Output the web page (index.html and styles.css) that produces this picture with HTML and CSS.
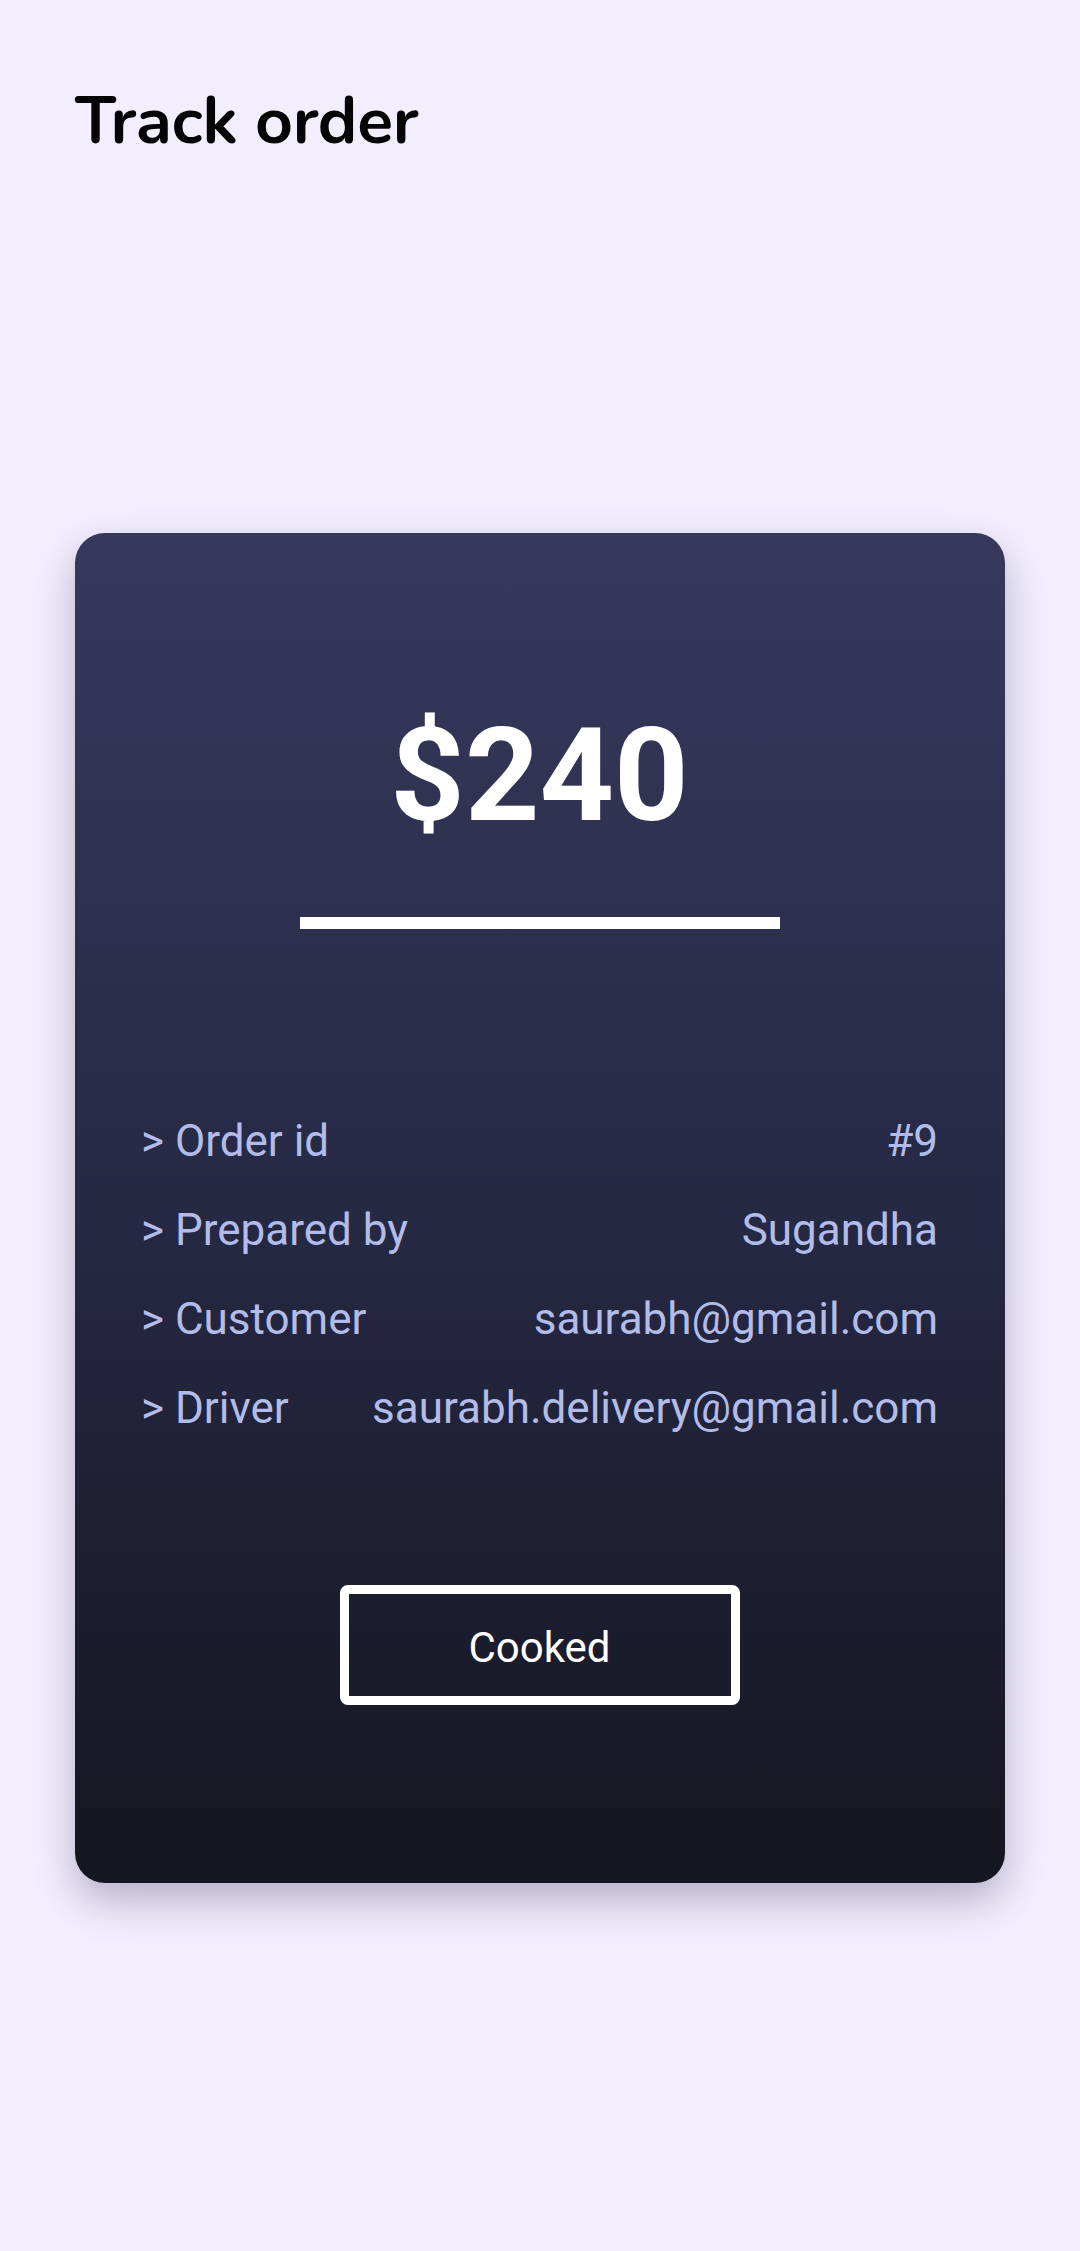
FILE: index.html
```html
<!DOCTYPE html>
<html lang="en">
<head>
<meta charset="utf-8">
<title>Track order</title>
<link rel="stylesheet" href="styles.css">
</head>
<body>
<div class="page">
  <header class="header">
    <h1 class="title">Track order</h1>
  </header>
  <section class="card">
    <div class="price">$240</div>
    <div class="divider"></div>
    <div class="details">
      <div class="row"><span class="label">&gt; Order id</span><span class="value">#9</span></div>
      <div class="row"><span class="label">&gt; Prepared by</span><span class="value">Sugandha</span></div>
      <div class="row"><span class="label">&gt; Customer</span><span class="value">saurabh@gmail.com</span></div>
      <div class="row"><span class="label">&gt; Driver</span><span class="value">saurabh.delivery@gmail.com</span></div>
    </div>
    <button class="status-btn" type="button">Cooked</button>
  </section>
</div>
</body>
</html>
```

FILE: styles.css
```css
html, body {
  margin: 0;
  padding: 0;
}
body {
  background: #f3eefd;
  width: 1080px;
  height: 2251px;
  overflow: hidden;
}
.page {
  display: flex;
  flex-direction: column;
  padding: 0 75px;
}
.header {
  padding-top: 83px;
}
.title {
  margin: 0;
  font-family: "Nunito", "Lato", "Open Sans", sans-serif;
  font-weight: 700;
  font-size: 66px;
  line-height: 76px;
  color: #050505;
  letter-spacing: -0.3px;
}
.card {
  margin-top: 374px;
  height: 1350px;
  box-sizing: border-box;
  border-radius: 30px;
  background: linear-gradient(180deg, #36395b 0%, #262944 50%, #141620 100%);
  box-shadow: 0 18px 40px rgba(60, 50, 100, 0.32);
  display: flex;
  flex-direction: column;
  align-items: center;
  padding: 178px 67px 0 66px;
  font-family: "Roboto", "Liberation Sans", sans-serif;
}
.price {
  font-size: 130px;
  line-height: 130px;
  font-weight: 700;
  color: #ffffff;
}
.divider {
  margin-top: 76px;
  width: 480px;
  height: 12px;
  background: #ffffff;
}
.details {
  margin-top: 168px;
  align-self: stretch;
  display: flex;
  flex-direction: column;
}
.row {
  display: flex;
  justify-content: space-between;
  font-size: 44px;
  line-height: 89px;
  color: #b3bce8;
}
.status-btn {
  margin-top: 132px;
  width: 400px;
  height: 120px;
  border: 9px solid #ffffff;
  border-radius: 8px;
  background: transparent;
  color: #ffffff;
  font-family: "Roboto", "Liberation Sans", sans-serif;
  font-size: 42px;
  padding: 4px 0 0 0;
}
```
